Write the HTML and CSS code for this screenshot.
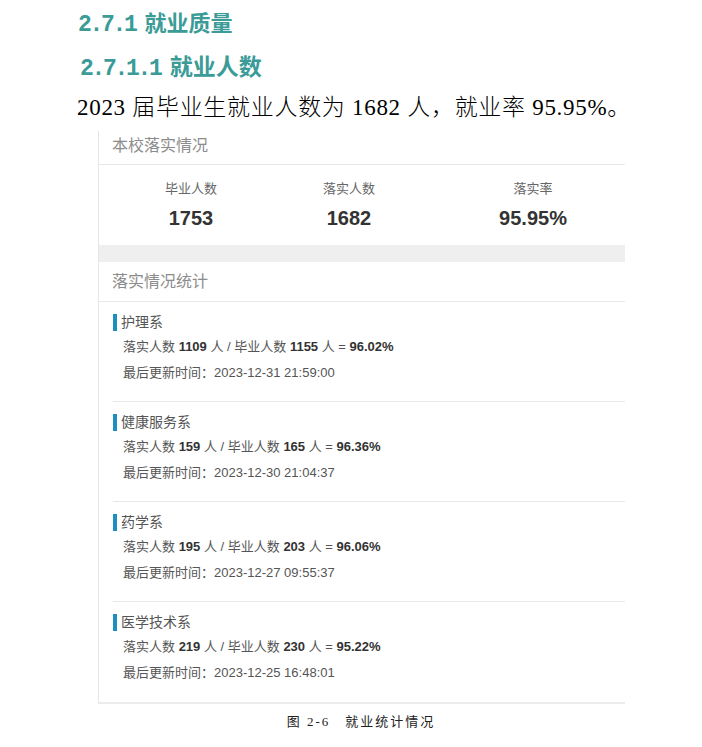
FILE: index.html
```html
<!DOCTYPE html>
<html lang="zh-CN">
<head>
<meta charset="utf-8">
<title>就业质量</title>
<link rel="stylesheet" href="styles.css">
</head>
<body>
<div class="page">
  <h1 class="h1"><span class="num">2.7.1</span> 就业质量</h1>
  <h2 class="h2"><span class="num">2.7.1.1</span> 就业人数</h2>
  <p class="body">2023 届毕业生就业人数为 1682 人，就业率 95.95%。</p>

  <div class="figure">
    <div class="shot">
      <div class="card">
        <div class="card-head">本校落实情况</div>
        <div class="stats">
          <div class="stat">
            <div class="stat-label">毕业人数</div>
            <div class="stat-value">1753</div>
          </div>
          <div class="stat">
            <div class="stat-label">落实人数</div>
            <div class="stat-value">1682</div>
          </div>
          <div class="stat">
            <div class="stat-label">落实率</div>
            <div class="stat-value">95.95%</div>
          </div>
        </div>
      </div>
      <div class="band"></div>
      <div class="card">
        <div class="card-head card-head-2">落实情况统计</div>
        <div class="item">
          <div class="item-title">护理系</div>
          <div class="item-line">落实人数 <b>1109</b> 人 / 毕业人数 <b>1155</b> 人 = <b>96.02%</b></div>
          <div class="item-line">最后更新时间：2023-12-31 21:59:00</div>
        </div>
        <div class="item">
          <div class="item-title">健康服务系</div>
          <div class="item-line">落实人数 <b>159</b> 人 / 毕业人数 <b>165</b> 人 = <b>96.36%</b></div>
          <div class="item-line">最后更新时间：2023-12-30 21:04:37</div>
        </div>
        <div class="item">
          <div class="item-title">药学系</div>
          <div class="item-line">落实人数 <b>195</b> 人 / 毕业人数 <b>203</b> 人 = <b>96.06%</b></div>
          <div class="item-line">最后更新时间：2023-12-27 09:55:37</div>
        </div>
        <div class="item">
          <div class="item-title">医学技术系</div>
          <div class="item-line">落实人数 <b>219</b> 人 / 毕业人数 <b>230</b> 人 = <b>95.22%</b></div>
          <div class="item-line">最后更新时间：2023-12-25 16:48:01</div>
        </div>
      </div>
    </div>
    <div class="caption">图 2-6　就业统计情况</div>
  </div>
</div>
</body>
</html>
```

FILE: styles.css
```css
html, body {
  margin: 0;
  padding: 0;
  background: #ffffff;
}

.page {
  width: 702px;
  padding-top: 6px;
}

.h1, .h2 {
  margin: 0;
  color: #3a9b97;
  font-family: "Noto Sans CJK SC", sans-serif;
  font-weight: 700;
}

.h1 {
  padding-left: 78px;
  font-size: 22px;
  line-height: 30px;
}

.h2 {
  padding-left: 80px;
  margin-top: 10px;
  font-size: 23px;
  line-height: 30px;
}

.num {
  font-family: "Liberation Mono", monospace;
  font-weight: 700;
  font-size: 23px;
  letter-spacing: -2.3px;
  margin-right: 4px;
}

.body {
  margin: 9px 0 0 77px;
  font-family: "Liberation Serif", "Noto Sans CJK SC", serif;
  font-size: 23px;
  font-weight: 300;
  letter-spacing: 0.7px;
  line-height: 30px;
  color: #000;
}

.figure {
  margin-top: 8px;
  padding-left: 98px;
  width: 526px;
}

.shot {
  width: 526px;
  overflow: hidden;
  border-left: 1px solid #e6e6e6;
  border-bottom: 2px solid #ececec;
  font-family: "Liberation Sans", "Noto Sans CJK SC", sans-serif;
}

.card {
  background: #fff;
}

.card-head {
  height: 34px;
  padding: 5px 0 0 13px;
  box-sizing: border-box;
  border-bottom: 1px solid #e8e8e8;
  font-size: 16px;
  line-height: 20px;
  color: #8c8c8c;
}

.card-head-2 {
  height: 40px;
  padding-top: 10px;
}

.stats {
  display: grid;
  grid-template-columns: 184px 132px 236px;
  height: 80px;
  text-align: center;
}

.stat-label {
  padding-top: 16px;
  font-size: 13px;
  line-height: 16px;
  color: #666;
}

.stat-value {
  margin-top: 10px;
  font-size: 20px;
  line-height: 22px;
  font-weight: 700;
  color: #333;
}

.band {
  height: 17px;
  background: #efefef;
}

.item {
  margin-left: 14px;
  padding: 12px 0 20px 0;
  border-bottom: 1px solid #e8e8e8;
}

.item:last-child {
  border-bottom: none;
  padding-bottom: 21px;
}

.item-title {
  border-left: 4px solid #1b8fbf;
  padding-left: 4px;
  font-size: 14px;
  line-height: 17px;
  color: #555;
}

.item-line {
  margin-top: 8px;
  padding-left: 10px;
  font-size: 13px;
  line-height: 16px;
  color: #555;
}

.item-line + .item-line {
  margin-top: 10px;
}

.item-line b {
  color: #333;
}

.caption {
  margin-top: 9px;
  text-align: center;
  font-family: "Liberation Serif", "Noto Sans CJK SC", serif;
  font-size: 13px;
  line-height: 18px;
  letter-spacing: 2px;
  color: #222;
}
```
